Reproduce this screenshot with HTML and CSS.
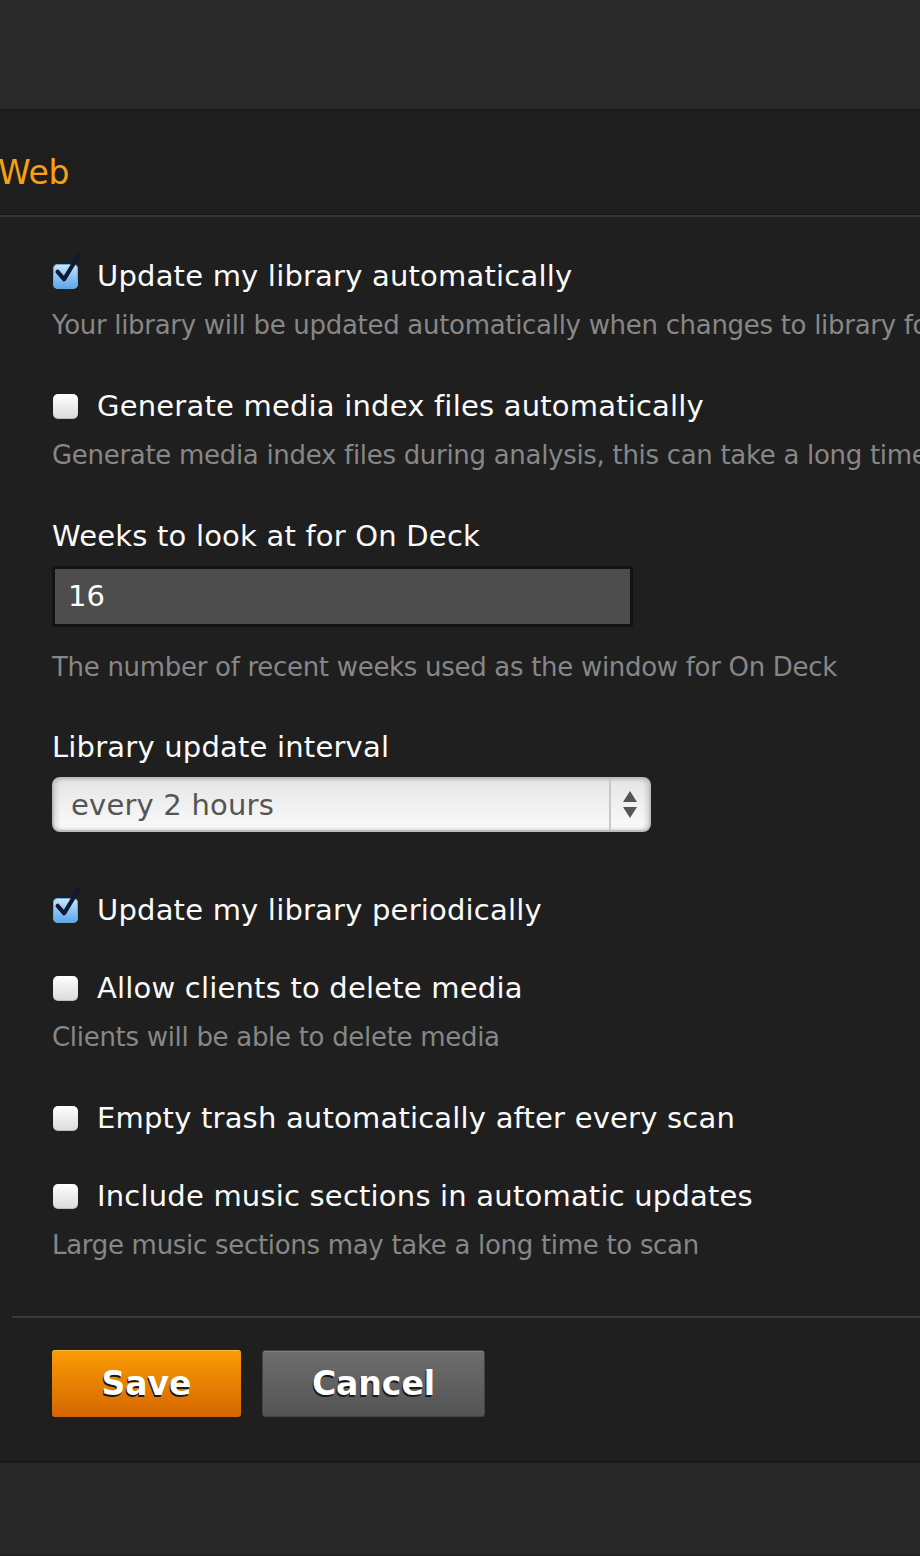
FILE: index.html
```html
<!DOCTYPE html>
<html>
<head>
<meta charset="utf-8">
<link rel="stylesheet" href="styles.css">
</head>
<body>
<div class="topbar"></div>
<div class="section-head"><h1 class="section-title">Web</h1></div>
<form class="settings">
  <div class="group">
    <label class="check-row"><span class="box checked"><svg class="tick" viewBox="0 0 30 34"><path d="M5 20 L12 28 L27 3" /></svg></span><span class="label">Update my library automatically</span></label>
    <p class="desc">Your library will be updated automatically when changes to library folders are detected</p>
  </div>
  <div class="group">
    <label class="check-row"><span class="box"></span><span class="label">Generate media index files automatically</span></label>
    <p class="desc">Generate media index files during analysis, this can take a long time</p>
  </div>
  <div class="group">
    <div class="label plain">Weeks to look at for On Deck</div>
    <div class="text-input">16</div>
    <p class="desc help">The number of recent weeks used as the window for On Deck</p>
  </div>
  <div class="group">
    <div class="label plain">Library update interval</div>
    <div class="select"><span class="select-value">every 2 hours</span><span class="select-arrows"><span class="up"></span><span class="down"></span></span></div>
  </div>
  <div class="group first-after-select">
    <label class="check-row"><span class="box checked"><svg class="tick" viewBox="0 0 30 34"><path d="M5 20 L12 28 L27 3" /></svg></span><span class="label">Update my library periodically</span></label>
  </div>
  <div class="group">
    <label class="check-row"><span class="box"></span><span class="label">Allow clients to delete media</span></label>
    <p class="desc">Clients will be able to delete media</p>
  </div>
  <div class="group">
    <label class="check-row"><span class="box"></span><span class="label">Empty trash automatically after every scan</span></label>
  </div>
  <div class="group">
    <label class="check-row"><span class="box"></span><span class="label">Include music sections in automatic updates</span></label>
    <p class="desc">Large music sections may take a long time to scan</p>
  </div>
  <div class="actions">
    <button type="button" class="btn save">Save</button>
    <button type="button" class="btn cancel">Cancel</button>
  </div>
</form>
<div class="footer"></div>
</body>
</html>
```
FILE: styles.css
```css
html, body {
  margin: 0;
  padding: 0;
  background: #1f1f1f;
  overflow: hidden;
}
body {
  width: 920px;
  height: 1556px;
  font-family: "DejaVu Sans", "Liberation Sans", sans-serif;
  color: #fff;
}
.topbar {
  height: 109px;
  background: #292929;
  border-bottom: 3px solid #1b1b1b;
}
.section-head {
  height: 102px;
  display: flex;
  align-items: center;
  background: #1e1e1e;
  border-bottom: 1px solid #151515;
  box-shadow: 0 2px 0 #333;
}
.section-title {
  margin: 0;
  font-weight: normal;
  font-size: 33px;
  color: #f7a014;
  letter-spacing: -0.3px;
  position: relative;
  left: -2px;
  top: 9px;
}
.settings {
  padding: 43px 0 0 0;
  display: flex;
  flex-direction: column;
  white-space: nowrap;
  overflow: hidden;
}
.group {
  display: flex;
  flex-direction: column;
  margin-bottom: 42px;
  padding-left: 52px;
}
.group.first-after-select { margin-top: 18px; }
.check-row {
  display: flex;
  align-items: center;
  height: 36px;
}
.label {
  font-size: 29px;
  line-height: 36px;
  color: #fbfbfb;
  letter-spacing: 0.2px;
}
.check-row .label { margin-left: 19px; }
.box {
  position: relative;
  width: 25px;
  height: 25px;
  margin-left: 1px;
  border-radius: 5px;
  background: linear-gradient(#ffffff, #ececec 50%, #dcdcdc);
  box-shadow: inset 0 -1px 1px rgba(0,0,0,0.15);
  flex: none;
}
.box.checked {
  background: linear-gradient(#cfe8fb, #8cc4f3 50%, #5aa6eb);
  box-shadow: inset 0 0 0 1px #6aa7dc;
}
.tick {
  position: absolute;
  left: 0px;
  top: -12px;
  width: 28px;
  height: 34px;
  overflow: visible;
}
.tick path {
  fill: none;
  stroke: #0e1a33;
  stroke-width: 4.5;
  stroke-linecap: round;
  stroke-linejoin: round;
}
.desc {
  margin: 13px 0 0 0;
  font-size: 26px;
  line-height: 36px;
  color: #878787;
  letter-spacing: -0.3px;
  padding-bottom: 3px;
}
.desc.help { margin-top: 22px; padding-bottom: 2px; }
.text-input {
  margin-top: 12px;
  width: 562px;
  height: 55px;
  background: #4d4d4d;
  border: 3px solid #131313;
  border-radius: 2px;
  font-size: 29px;
  line-height: 55px;
  padding-left: 13px;
  box-sizing: content-box;
  color: #fff;
}
.select {
  margin-top: 12px;
  width: 595px;
  height: 51px;
  border: 2px solid #bdbdbd;
  border-radius: 8px;
  background: linear-gradient(#e5e5e5, #f0f0f0 50%, #fafafa);
  display: flex;
  align-items: center;
  box-shadow: inset 3px 0 4px rgba(0,0,0,0.12), inset -3px 0 4px rgba(0,0,0,0.12);
}
.select-value {
  flex: 1;
  font-size: 29px;
  color: #555;
  padding-left: 17px;
  letter-spacing: 0.2px;
}
.select-arrows {
  width: 38px;
  height: 51px;
  border-left: 2px solid #c8c8c8;
  display: flex;
  flex-direction: column;
  align-items: center;
  justify-content: center;
  gap: 5px;
}
.up, .down {
  width: 0;
  height: 0;
  border-left: 7px solid transparent;
  border-right: 7px solid transparent;
}
.up { border-bottom: 11px solid #555; }
.down { border-top: 11px solid #555; }
.actions {
  margin-top: 8px;
  margin-left: 12px;
  border-top: 2px solid #393939;
  padding: 32px 0 43px 40px;
  display: flex;
  gap: 21px;
}
.btn {
  height: 67px;
  border: none;
  border-radius: 3px;
  font-family: "DejaVu Sans", sans-serif;
  font-weight: bold;
  font-size: 33px;
  color: #fff;
  text-shadow: -1px 2px 0 #1a1a1a;
  padding: 0;
}
.save {
  width: 189px;
  background: linear-gradient(#fa9c04, #d46600);
  box-shadow: inset 0 1px 0 rgba(255,220,120,0.5);
}
.cancel {
  width: 223px;
  background: linear-gradient(#6d6d6d, #545454);
  box-shadow: inset 0 1px 0 rgba(255,255,255,0.15);
  border: 1px solid #444;
}
.footer {
  border-top: 3px solid #191919;
  background: #272727;
  height: 92px;
}
```
